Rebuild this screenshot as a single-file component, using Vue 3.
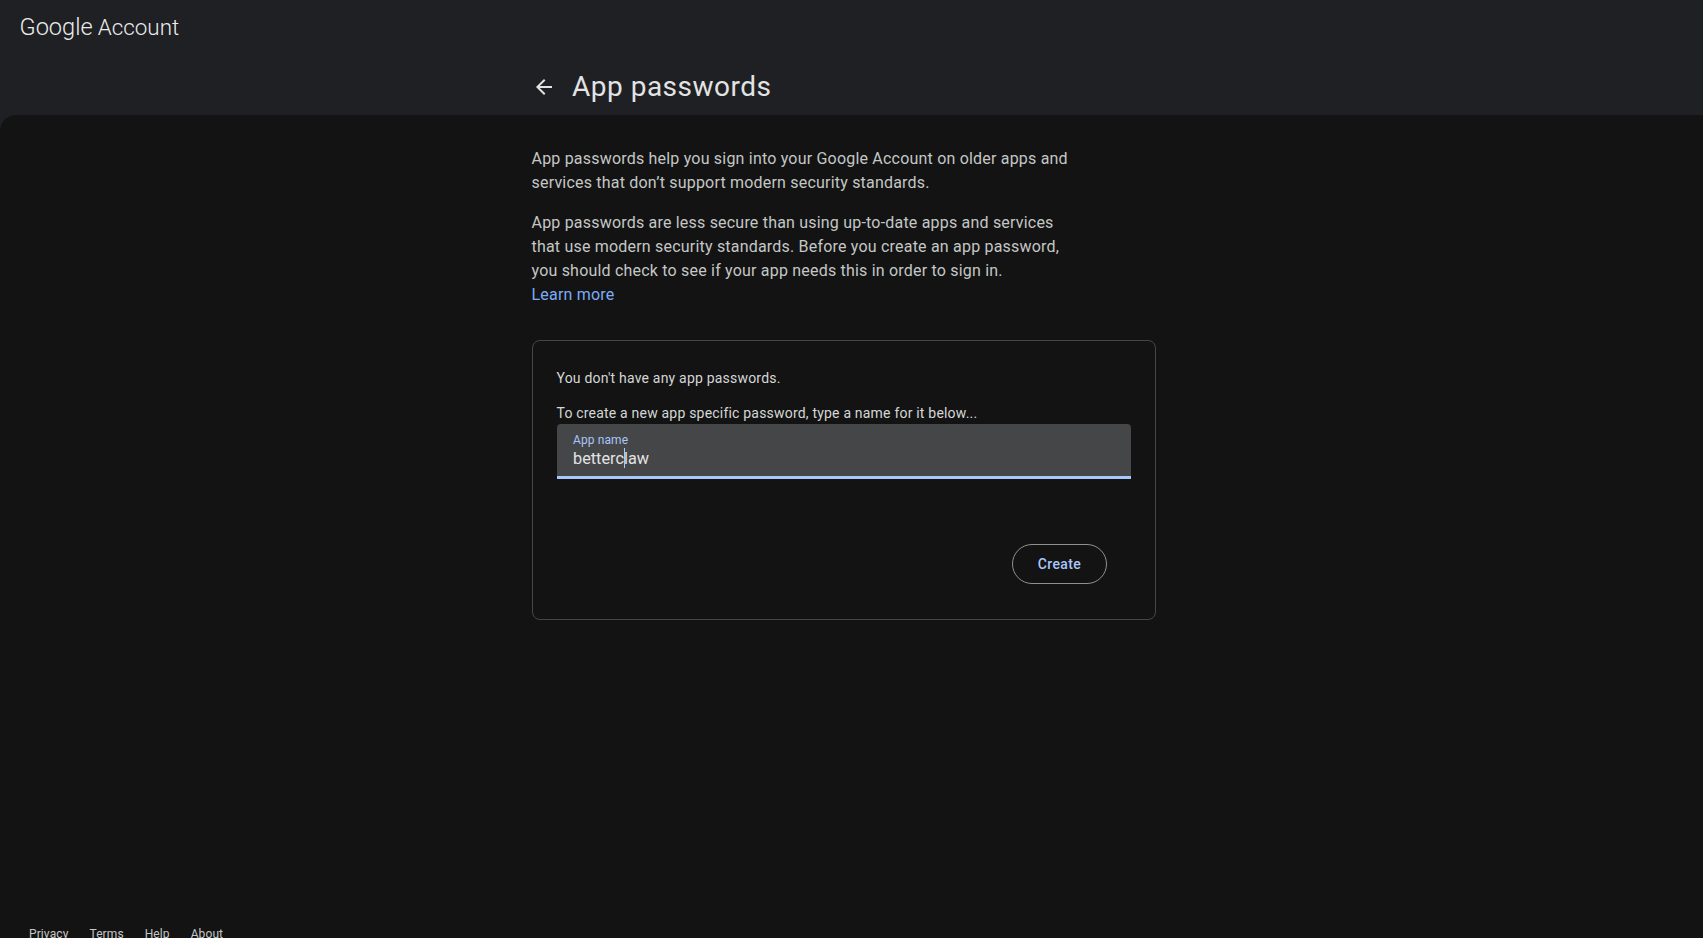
<template>
  <div class="page">
    <header class="top">
      <div class="brand">
        <span class="google">Google</span>
        <span class="account">Account</span>
      </div>
      <div class="title-row">
        <button class="back" aria-label="Back">
          <svg width="24" height="24" viewBox="0 0 24 24" fill="currentColor">
            <path d="M20 11H7.83l5.59-5.59L12 4l-8 8 8 8 1.41-1.41L7.83 13H20v-2z" />
          </svg>
        </button>
        <h1>App passwords</h1>
      </div>
    </header>

    <main class="main">
      <div class="content">
        <p class="intro">
          App passwords help you sign into your Google Account on older apps and services that don’t support modern security standards.
        </p>
        <p class="intro">
          App passwords are less secure than using up-to-date apps and services that use modern security standards. Before you create an app password, you should check to see if your app needs this in order to sign in.
          <a href="#" class="learn">Learn more</a>
        </p>

        <section class="card">
          <div class="none">You don't have any app passwords.</div>
          <div class="hint">To create a new app specific password, type a name for it below...</div>
          <div class="field">
            <label>App name</label>
            <div class="value">betterc<span class="caret"></span>law</div>
          </div>
          <div class="actions">
            <button class="create">Create</button>
          </div>
        </section>
      </div>
    </main>

    <footer class="foot">
      <a v-for="link in links" :key="link" href="#">{{ link }}</a>
    </footer>
  </div>
</template>

<script setup>
const links = ['Privacy', 'Terms', 'Help', 'About']
</script>

<style>
html,
body {
  margin: 0;
  background: #1f2023;
  overflow: hidden;
}
</style>

<style scoped>
.page {
  height: 938px;
  overflow: hidden;
  display: flex;
  flex-direction: column;
  font-family: Roboto, "Liberation Sans", sans-serif;
  color: #c4c7c5;
}

.top {
  height: 115px;
  flex: none;
  background: #1f2023;
}

.brand {
  display: flex;
  align-items: center;
  gap: 5px;
  height: 54px;
  padding-left: 19.5px;
  color: #ececec;
}

.google {
  font-size: 23.6px;
  font-weight: 300;
}

.account {
  font-size: 22.4px;
  font-weight: 300;
}

.title-row {
  display: flex;
  align-items: center;
  height: 40px;
  margin-top: 1px;
  padding-top: 12px;
  padding-left: 532px;
  color: #e3e3e3;
}

.back {
  width: 24px;
  height: 24px;
  padding: 0;
  border: 0;
  background: none;
  color: #e3e3e3;
  margin-right: 16px;
}

h1 {
  margin: 0;
  font-size: 28px;
  font-weight: 400;
  line-height: 36px;
  letter-spacing: 0.5px;
}

.main {
  flex: 1;
  background: #131314;
  border-top-left-radius: 16px;
}

.content {
  width: 624px;
  margin-left: 531px;
  padding-top: 32px;
}

.intro {
  margin: 0 0 16px;
  width: 545px;
  padding-left: 0.5px;
  font-size: 16px;
  line-height: 24px;
  letter-spacing: 0.2px;
}

.learn {
  display: block;
  color: #7cacf8;
  text-decoration: none;
}

.card {
  box-sizing: border-box;
  width: 624px;
  height: 280px;
  margin: 33px 0 0 1px;
  padding: 27px 24px 0;
  border: 1px solid #444746;
  border-radius: 8px;
  font-size: 14px;
  line-height: 20px;
  letter-spacing: 0.2px;
  color: #d5d7d6;
}

.none,
.hint {
  margin-left: -0.5px;
}

.hint {
  margin-top: 15px;
}

.field {
  box-sizing: border-box;
  height: 55px;
  margin-top: 1px;
  padding: 8px 16px 0;
  background: #444648;
  border-bottom: 3px solid #a8c7fa;
  border-radius: 4px 4px 0 0;
}

.field label {
  display: block;
  font-size: 12px;
  line-height: 16px;
  letter-spacing: 0.1px;
  color: #a8c7fa;
}

.value {
  font-size: 16.3px;
  line-height: 22px;
  letter-spacing: 0;
  color: #e3e3e3;
}

.caret {
  display: inline-block;
  width: 1px;
  height: 20px;
  margin-right: -1px;
  vertical-align: -4px;
  background: #a8c7fa;
}

.actions {
  display: flex;
  justify-content: flex-end;
  margin-top: 65px;
  padding-right: 24px;
}

.create {
  width: 95px;
  height: 40px;
  padding: 0;
  background: none;
  border: 1px solid #8e918f;
  border-radius: 20px;
  font: 500 14px Roboto, sans-serif;
  letter-spacing: 0.4px;
  color: #a8c7fa;
}

.foot {
  flex: none;
  display: flex;
  gap: 21px;
  height: 12px;
  padding-left: 29px;
  font-size: 12px;
  line-height: 16px;
  letter-spacing: 0.1px;
  background: #131314;
}

.foot a {
  color: #c4c7c5;
  text-decoration: none;
}
</style>
